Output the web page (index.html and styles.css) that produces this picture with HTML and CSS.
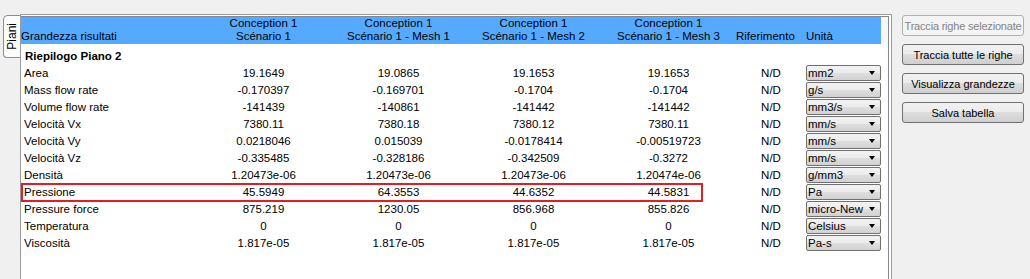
FILE: index.html
```html
<!DOCTYPE html>
<html lang="it">
<head>
  <meta charset="UTF-8" />
  <meta name="viewport" content="width=device-width, initial-scale=1" />
  <title>Risultati</title>
  <link rel="stylesheet" href="styles.css">
</head>
<body>
  <div class="app">
    <div class="tab-strip">
      <div class="tab"><span>Piani</span></div>
    </div>

    <div class="tab-frame">
      <div class="table-view">
        <div class="head">
          <div class="head-cols">
            <div class="hname">Grandezza risultati</div>
            <div class="hcol">Conception 1<br />Scénario 1</div>
            <div class="hcol">Conception 1<br />Scénario 1 - Mesh 1</div>
            <div class="hcol">Conception 1<br />Scénario 1 - Mesh 2</div>
            <div class="hcol">Conception 1<br />Scénario 1 - Mesh 3</div>
            <div class="href">Riferimento</div>
            <div class="hunit">Unità</div>
          </div>
          <div class="head-fill"></div>
        </div>

        <div class="rows">
          <div class="row">
            <div class="name group">Riepilogo Piano 2</div>
          </div>

          <div class="row">
            <div class="name">Area</div>
            <div class="num">19.1649</div>
            <div class="num">19.0865</div>
            <div class="num">19.1653</div>
            <div class="num">19.1653</div>
            <div class="ref">N/D</div>
            <div class="unit"><span>mm2</span></div>
          </div>

          <div class="row">
            <div class="name">Mass flow rate</div>
            <div class="num">-0.170397</div>
            <div class="num">-0.169701</div>
            <div class="num">-0.1704</div>
            <div class="num">-0.1704</div>
            <div class="ref">N/D</div>
            <div class="unit"><span>g/s</span></div>
          </div>

          <div class="row">
            <div class="name">Volume flow rate</div>
            <div class="num">-141439</div>
            <div class="num">-140861</div>
            <div class="num">-141442</div>
            <div class="num">-141442</div>
            <div class="ref">N/D</div>
            <div class="unit"><span>mm3/s</span></div>
          </div>

          <div class="row">
            <div class="name">Velocità Vx</div>
            <div class="num">7380.11</div>
            <div class="num">7380.18</div>
            <div class="num">7380.12</div>
            <div class="num">7380.11</div>
            <div class="ref">N/D</div>
            <div class="unit"><span>mm/s</span></div>
          </div>

          <div class="row">
            <div class="name">Velocità Vy</div>
            <div class="num">0.0218046</div>
            <div class="num">0.015039</div>
            <div class="num">-0.0178414</div>
            <div class="num">-0.00519723</div>
            <div class="ref">N/D</div>
            <div class="unit"><span>mm/s</span></div>
          </div>

          <div class="row">
            <div class="name">Velocità Vz</div>
            <div class="num">-0.335485</div>
            <div class="num">-0.328186</div>
            <div class="num">-0.342509</div>
            <div class="num">-0.3272</div>
            <div class="ref">N/D</div>
            <div class="unit"><span>mm/s</span></div>
          </div>

          <div class="row">
            <div class="name">Densità</div>
            <div class="num">1.20473e-06</div>
            <div class="num">1.20473e-06</div>
            <div class="num">1.20473e-06</div>
            <div class="num">1.20474e-06</div>
            <div class="ref">N/D</div>
            <div class="unit"><span>g/mm3</span></div>
          </div>

          <div class="row marked">
            <div class="mark"></div>
            <div class="name">Pressione</div>
            <div class="num">45.5949</div>
            <div class="num">64.3553</div>
            <div class="num">44.6352</div>
            <div class="num">44.5831</div>
            <div class="ref">N/D</div>
            <div class="unit"><span>Pa</span></div>
          </div>

          <div class="row">
            <div class="name">Pressure force</div>
            <div class="num">875.219</div>
            <div class="num">1230.05</div>
            <div class="num">856.968</div>
            <div class="num">855.826</div>
            <div class="ref">N/D</div>
            <div class="unit"><span>micro-New</span></div>
          </div>

          <div class="row">
            <div class="name">Temperatura</div>
            <div class="num">0</div>
            <div class="num">0</div>
            <div class="num">0</div>
            <div class="num">0</div>
            <div class="ref">N/D</div>
            <div class="unit"><span>Celsius</span></div>
          </div>

          <div class="row">
            <div class="name">Viscosità</div>
            <div class="num">1.817e-05</div>
            <div class="num">1.817e-05</div>
            <div class="num">1.817e-05</div>
            <div class="num">1.817e-05</div>
            <div class="ref">N/D</div>
            <div class="unit"><span>Pa-s</span></div>
          </div>
        </div>
      </div>
    </div>

    <div class="actions">
      <button class="btn" disabled>Traccia righe selezionate</button>
      <button class="btn">Traccia tutte le righe</button>
      <button class="btn">Visualizza grandezze</button>
      <button class="btn">Salva tabella</button>
    </div>
  </div>
</body>
</html>
```

FILE: styles.css
```css
body {
  margin: 0;
  background: #f0f0f0;
  color: #000;
  font-family: "Liberation Sans", Arial, sans-serif;
  font-size: 11.5px;
  overflow: hidden;
}

.app {
  display: flex;
  align-items: flex-start;
  padding-top: 14px;
  height: 265px;
}

/* left tab */
.tab-strip {
  width: 20px;
  flex: none;
  padding-top: 1px;
}

.tab {
  margin-left: 3px;
  width: 16px;
  height: 41px;
  border: 1px solid #898c95;
  border-right: none;
  border-radius: 5px 0 0 4px;
  background: #fcfcfc;
  display: flex;
  align-items: center;
  justify-content: center;
  font-size: 12px;
}

.tab span {
  writing-mode: vertical-rl;
  transform: rotate(180deg);
}

/* frame + table */
.tab-frame {
  width: 870px;
  height: 265px;
  flex: none;
  border: 1px solid #9a9a9a;
  border-bottom: none;
  background: #fff;
}

.table-view {
  margin: 1px 2px 0 0;
  height: 264px;
  border-top: 1px solid #828790;
  border-right: 1px solid #828790;
  background: #fff;
}

.head {
  display: flex;
  height: 27px;
}

.head-cols,
.row {
  display: grid;
  grid-template-columns: 175px 135px 135px 135px 135px 70px 75px;
}

.head-cols {
  width: 860px;
  background: #55aaff;
  align-items: end;
  line-height: 13px;
  padding-bottom: 1px;
  box-sizing: border-box;
}

.head-fill {
  flex: 1;
  background: #f7f7f7;
}

.hcol {
  text-align: center;
}

.rows {
  padding-top: 4px;
}

.row {
  height: 17px;
  line-height: 17px;
  white-space: nowrap;
}

.name {
  padding-left: 3px;
}

.name.group {
  padding-left: 4px;
  font-weight: bold;
}

.num,
.ref {
  text-align: center;
}

.unit {
  position: relative;
  height: 16px;
  box-sizing: border-box;
  border: 1px solid #707070;
  border-radius: 2px;
  background: linear-gradient(#f3f3f3, #ebebeb 50%, #dedede 50%, #d2d2d2);
  line-height: 15px;
  padding: 0 12px 0 1px;
}

.unit::after {
  content: "";
  position: absolute;
  right: 5px;
  top: 5px;
  border-left: 3.5px solid transparent;
  border-right: 3.5px solid transparent;
  border-top: 4px solid #000;
}

/* annotation box over the Pressione row */
.marked {
  position: relative;
}

.mark {
  position: absolute;
  left: 0;
  top: -1px;
  width: 682px;
  height: 19px;
  box-sizing: border-box;
  border: 2px solid #e21d25;
}

/* right buttons */
.actions {
  margin-left: 10px;
  padding-top: 1px;
  width: 122px;
  display: flex;
  flex-direction: column;
  gap: 8px;
}

.btn {
  height: 21px;
  padding: 0;
  font-family: "Liberation Sans", Arial, sans-serif;
  font-size: 11px;
  color: #000;
  border: 1px solid #707070;
  border-radius: 3px;
  background: linear-gradient(#f2f2f2, #ebebeb 50%, #dddddd 50%, #cfcfcf);
}

.btn:disabled {
  color: #838383;
  border-color: #adb2b5;
  background: #f4f4f4;
  letter-spacing: -0.2px;
}
```
